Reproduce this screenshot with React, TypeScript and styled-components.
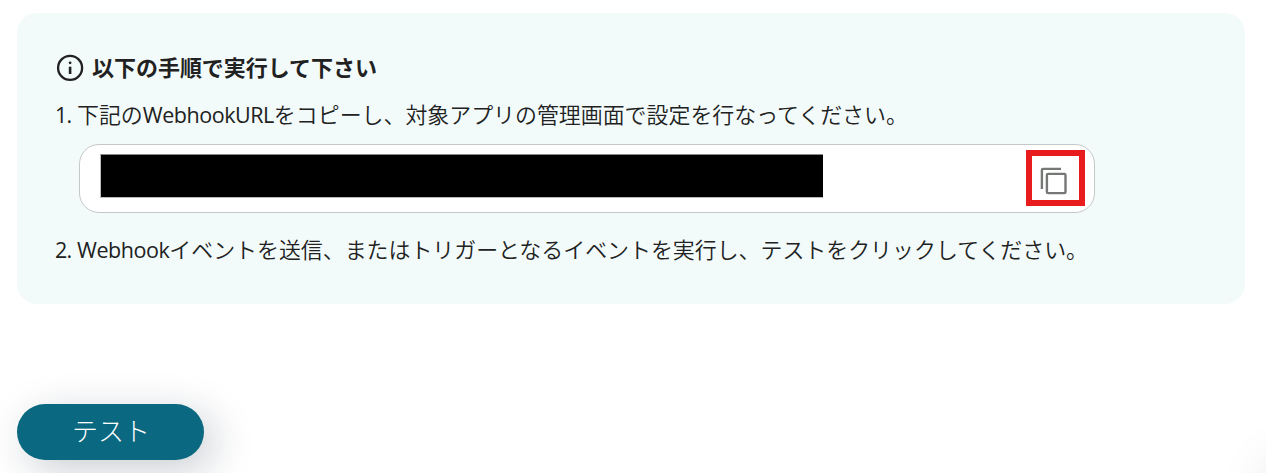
import styled, { createGlobalStyle } from 'styled-components'

const GlobalStyle = createGlobalStyle`
    body {
        margin: 0;
        background: #fff;
        color: #212121;
        font-family: 'Open Sans', 'Noto Sans CJK JP', sans-serif;
        overflow: hidden;
    }
`
const Page = styled.main`
    position: relative;
    height: 473px;
    box-sizing: border-box;
    padding: 13px 21px 0 17px;
    overflow: hidden;
`
const Panel = styled.section`
    height: 291px;
    box-sizing: border-box;
    padding: 38px 38px 0;
    border-radius: 20px;
    background: #f2fbfa;
`
const Heading = styled.h2`
    display: flex;
    align-items: center;
    gap: 8px;
    height: 34px;
    margin: 0 0 0 1px;
    font-size: 21.98px;
    font-weight: 700;
    line-height: 34px;
    white-space: nowrap;
`
const Step = styled.div<{ $top: number }>`
    display: flex;
    height: 34px;
    margin-top: ${({ $top }) => $top}px;
    font-size: 21.93px;
    font-weight: 350;
    line-height: 34px;
    white-space: nowrap;
`
const StepNumber = styled.span`
    width: 22px;
    font-size: 21.5px;
    font-weight: 370;
    letter-spacing: -0.8px;
`
const Latin = styled.span`
    font-size: 21.5px;
    font-weight: 370;
    letter-spacing: -0.45px;
`
const UrlBox = styled.div`
    display: flex;
    align-items: center;
    justify-content: space-between;
    width: 1016px;
    height: 69px;
    box-sizing: border-box;
    margin: 12px 0 0 24px;
    padding: 0 9px 0 20px;
    border: 1px solid #c4c8c8;
    border-radius: 20px;
    background: #fff;
`
const Redacted = styled.div`
    width: 723px;
    height: 44px;
    box-sizing: border-box;
    margin-bottom: 5px;
    border: solid #bbb;
    border-top-color: #888;
    border-width: 1px 0 1px 1px;
    background: #000;
`
const CopyButton = styled.button`
    display: flex;
    align-items: center;
    justify-content: center;
    width: 59px;
    height: 56px;
    margin-bottom: 1px;
    padding: 6px 5px 0 0;
    border: 6px solid #e81c1c;
    box-sizing: border-box;
    background: #fff;
`
const TestButton = styled.button`
    display: block;
    width: 187px;
    height: 56px;
    margin-top: 100px;
    padding: 0 0 2px 1px;
    border: 0;
    border-radius: 28px;
    background: #0a6880;
    box-shadow: 10px 10px 40px rgba(15, 30, 55, 0.22);
    color: #fff;
    font-family: inherit;
    font-size: 26px;
    font-weight: 300;
    line-height: 54px;
`
const WidgetShadow = styled.div`
    position: absolute;
    left: 1271px;
    top: 463px;
    width: 80px;
    height: 80px;
    border-radius: 50%;
    box-shadow: 0 0 54px 6px rgba(0, 0, 0, 0.12);
`

const InfoIcon = () => (
    <svg width="28" height="28" viewBox="0 0 28 28" fill="none">
        <circle cx="14.1" cy="13.9" r="12" stroke="#212121" strokeWidth="2.3" />
        <path d="M14.1 12.7v7.3" stroke="#212121" strokeWidth="2.6" />
        <circle cx="14.1" cy="8.8" r="1.4" fill="#212121" />
    </svg>
)

const CopyIcon = () => (
    <svg width="28" height="28" viewBox="0 0 28 28" fill="none" stroke="#757875" strokeWidth="2.4">
        <path d="M2.9 22V3.1q0-1.2 1.2-1.2H22" />
        <rect x="7.9" y="6.9" width="18.6" height="19.2" rx="1.2" />
    </svg>
)

const App = () => {
    return (
        <>
            <GlobalStyle />
            <Page>
                <Panel>
                    <Heading>
                        <InfoIcon />
                        以下の手順で実行して下さい
                    </Heading>
                    <Step $top={13}>
                        <StepNumber>1.</StepNumber>
                        <span>
                            下記の<Latin>WebhookURL</Latin>
                            をコピーし、対象アプリの管理画面で設定を行なってください。
                        </span>
                    </Step>
                    <UrlBox>
                        <Redacted />
                        <CopyButton aria-label="コピー">
                            <CopyIcon />
                        </CopyButton>
                    </UrlBox>
                    <Step $top={20}>
                        <StepNumber>2.</StepNumber>
                        <span>
                            <Latin>Webhook</Latin>
                            イベントを送信、またはトリガーとなるイベントを実行し、テストをクリックしてください。
                        </span>
                    </Step>
                </Panel>
                <TestButton>テスト</TestButton>
                <WidgetShadow />
            </Page>
        </>
    )
}

export default App
